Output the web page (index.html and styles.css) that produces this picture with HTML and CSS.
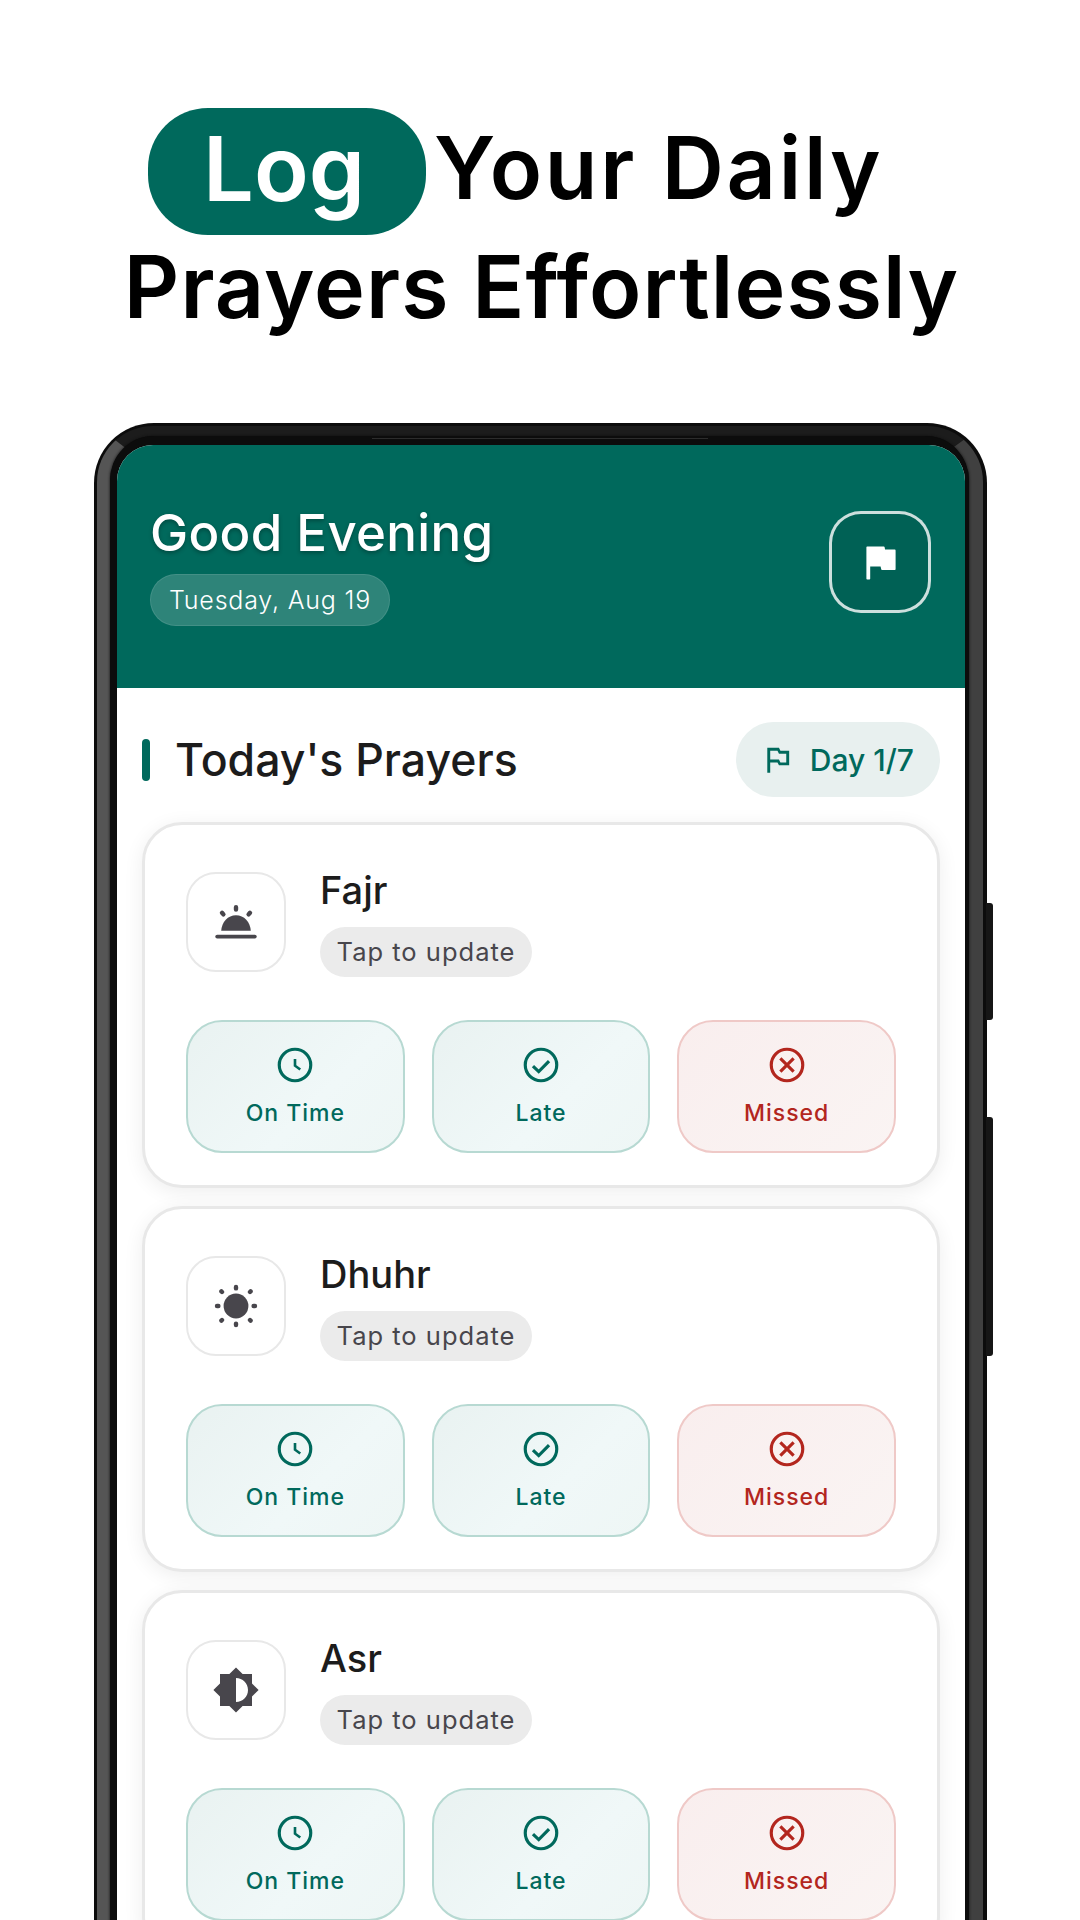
FILE: index.html
```html
<!DOCTYPE html>
<html>
  <head>
    <title>Log Your Daily Prayers</title>
    <meta charset="utf-8">
    <link rel="stylesheet" href="styles.css">
  </head>
  <body>
    <!-- (A) HEADLINE -->
    <header class="headline">
      <div class="headline-row">
        <span class="headline-pill">Log</span>
        <span class="headline-text">Your Daily</span>
      </div>
      <div class="headline-line">Prayers Effortlessly</div>
    </header>

    <!-- (B) PHONE -->
    <main class="phone">
      <span class="side-key side-key-power"></span>
      <span class="side-key side-key-volume"></span>
      <span class="speaker"></span>
      <div class="rim">
        <div class="bezel">
          <div class="screen">
            <!-- (B1) APP BAR -->
            <section class="app-bar">
              <div>
                <h1 class="greeting">Good Evening</h1>
                <span class="date-chip">Tuesday, Aug 19</span>
              </div>
              <button class="flag-btn">
                <svg width="48" height="48" viewBox="0 0 24 24"><path class="flag-fill" d="M14.2 6.2 13.9 4.6H5.6V20.4H6.7V13.8H12.6L13 15.6H19.4V6.2Z"/></svg>
              </button>
            </section>

            <!-- (B2) PRAYER LIST -->
            <section class="prayers">
              <div class="prayers-head">
                <h2 class="prayers-title">Today's Prayers</h2>
                <div class="day-pill">
                  <svg width="35" height="35" viewBox="0 0 24 24"><path d="M14 6l-1-2H5v17h2v-7h5l1 2h7V6h-6zm4 8h-4l-1-2H7V6h5l1 2h5v6z"/></svg>
                  <span>Day 1/7</span>
                </div>
              </div>

              <article class="card">
                <div class="card-top">
                  <div class="prayer-icon">
                    <svg width="48" height="48" viewBox="0 0 24 24">
                      <path class="solid" d="M4.6 16.4C4.8 12 8 8.6 12 8.6S19.2 12 19.4 16.4Z"/>
                      <path class="rays" d="M2.6 19.3H21.4"/>
                      <path class="rays rays-wide" d="M12 4.6V5.8M5 7.4 5.7 8.2M19 7.4 18.3 8.2"/>
                    </svg>
                  </div>
                  <div>
                    <div class="prayer-name">Fajr</div>
                    <span class="tap-chip">Tap to update</span>
                  </div>
                </div>
                <div class="actions">
                  <button class="action action-ok">
                    <svg width="42" height="42" viewBox="0 0 24 24"><circle cx="12" cy="12" r="9"/><path class="thin" d="M12 8.6V12.4L15 14.6"/></svg>
                    <span>On Time</span>
                  </button>
                  <button class="action action-ok">
                    <svg width="42" height="42" viewBox="0 0 24 24"><circle cx="12" cy="12" r="9"/><path d="M7.4 12.6 10.7 15.8 16.6 9.8"/></svg>
                    <span>Late</span>
                  </button>
                  <button class="action action-miss">
                    <svg width="42" height="42" viewBox="0 0 24 24"><circle cx="12" cy="12" r="9"/><path d="M8.2 8.2 15.8 15.8M15.8 8.2 8.2 15.8"/></svg>
                    <span>Missed</span>
                  </button>
                </div>
              </article>

              <article class="card">
                <div class="card-top">
                  <div class="prayer-icon">
                    <svg width="48" height="48" viewBox="0 0 24 24">
                      <circle class="solid" cx="12" cy="12" r="6.2"/>
                      <path class="rays rays-wide" d="M12 2.5V3.2M12 20.8V21.5M2.5 12H3.2M20.8 12H21.5M4.7 4.7 5 5M19.3 4.7 19 5M4.7 19.3 5 19M19.3 19.3 19 19"/>
                    </svg>
                  </div>
                  <div>
                    <div class="prayer-name">Dhuhr</div>
                    <span class="tap-chip">Tap to update</span>
                  </div>
                </div>
                <div class="actions">
                  <button class="action action-ok">
                    <svg width="42" height="42" viewBox="0 0 24 24"><circle cx="12" cy="12" r="9"/><path class="thin" d="M12 8.6V12.4L15 14.6"/></svg>
                    <span>On Time</span>
                  </button>
                  <button class="action action-ok">
                    <svg width="42" height="42" viewBox="0 0 24 24"><circle cx="12" cy="12" r="9"/><path d="M7.4 12.6 10.7 15.8 16.6 9.8"/></svg>
                    <span>Late</span>
                  </button>
                  <button class="action action-miss">
                    <svg width="42" height="42" viewBox="0 0 24 24"><circle cx="12" cy="12" r="9"/><path d="M8.2 8.2 15.8 15.8M15.8 8.2 8.2 15.8"/></svg>
                    <span>Missed</span>
                  </button>
                </div>
              </article>

              <article class="card">
                <div class="card-top">
                  <div class="prayer-icon">
                    <svg width="48" height="48" viewBox="0 0 24 24"><path class="solid" d="M20 15.31 23.31 12 20 8.69V4h-4.69L12 .69 8.69 4H4v4.69L.69 12 4 15.31V20h4.69L12 23.31 15.31 20H20v-4.69zM12 18V6c3.31 0 6 2.69 6 6s-2.69 6-6 6z"/></svg>
                  </div>
                  <div>
                    <div class="prayer-name">Asr</div>
                    <span class="tap-chip">Tap to update</span>
                  </div>
                </div>
                <div class="actions">
                  <button class="action action-ok">
                    <svg width="42" height="42" viewBox="0 0 24 24"><circle cx="12" cy="12" r="9"/><path class="thin" d="M12 8.6V12.4L15 14.6"/></svg>
                    <span>On Time</span>
                  </button>
                  <button class="action action-ok">
                    <svg width="42" height="42" viewBox="0 0 24 24"><circle cx="12" cy="12" r="9"/><path d="M7.4 12.6 10.7 15.8 16.6 9.8"/></svg>
                    <span>Late</span>
                  </button>
                  <button class="action action-miss">
                    <svg width="42" height="42" viewBox="0 0 24 24"><circle cx="12" cy="12" r="9"/><path d="M8.2 8.2 15.8 15.8M15.8 8.2 8.2 15.8"/></svg>
                    <span>Missed</span>
                  </button>
                </div>
              </article>
            </section>
          </div>
        </div>
      </div>
    </main>
  </body>
</html>
```

FILE: styles.css
```css
/* (A) PAGE */
* {
  box-sizing: border-box;
  font-family: Inter, "Liberation Sans", sans-serif;
}
html, body { height: 1920px; }
body {
  margin: 0;
  overflow: hidden;
  background: #fff;
}

/* (B) HEADLINE */
.headline {
  height: 423px;
  padding-top: 108px;
  color: #000;
  font-weight: 600;
  font-size: 86px;
  letter-spacing: 1.1px;
}
.headline-row {
  display: flex;
  margin-left: 148px;
  height: 127px;
}
.headline-pill {
  width: 278px;
  height: 127px;
  margin-right: 8px;
  padding-right: 6px;
  border-radius: 60px;
  background: #00695c;
  color: #fff;
  font-size: 90px;
  line-height: 122px;
  letter-spacing: 0;
  text-align: center;
  font-weight: 600;
}
.headline-text {
  line-height: 120px;
  letter-spacing: 2.8px;
}
.headline-line {
  height: 120px;
  margin-top: -8px;
  padding-left: 3px;
  line-height: 120px;
  text-align: center;
}

/* (C) PHONE FRAME */
.phone {
  position: relative;
  width: 893px;
  height: 1600px;
  margin-left: 94px;
  padding: 3px 4px 0 3px;
  border-radius: 60px 60px 0 0;
  background: #0c0c0c;
}
.rim {
  height: 100%;
  border-style: solid;
  border-width: 10px 14px 0 13px;
  border-color: #1c1c1c #404040 #404040 #555;
  border-radius: 56px 56px 0 0;
}
.bezel {
  height: 100%;
  padding: 9px 4px 0 7px;
  border-radius: 44px 44px 0 0;
  background: #0c0c0c;
  box-shadow: 0 0 3px #0c0c0c;
}
.screen {
  height: 100%;
  overflow: hidden;
  border-radius: 36px 36px 0 0;
  background: #fff;
}
.speaker {
  position: absolute;
  top: 15px;
  left: 278px;
  width: 336px;
  height: 1px;
  background: #2c2c2c;
}
.side-key {
  position: absolute;
  left: 892px;
  width: 7px;
  border-radius: 0 3px 3px 0;
  background: #161616;
}
.side-key-power { top: 480px; height: 117px; }
.side-key-volume { top: 694px; height: 239px; }

/* (D) APP BAR */
.app-bar {
  display: flex;
  justify-content: space-between;
  height: 243px;
  padding: 58px 34px 0 33px;
  background: #00695c;
  color: #fff;
}
.greeting {
  margin: 0 0 11px 0;
  font-size: 51px;
  line-height: 60px;
  font-weight: 500;
  letter-spacing: .3px;
  text-shadow: 0 2px 4px rgba(0, 0, 0, .3);
}
.date-chip {
  display: inline-block;
  height: 52px;
  padding: 0 18px;
  border: 1px solid rgba(255, 255, 255, .1);
  border-radius: 26px;
  background: rgba(255, 255, 255, .18);
  font-size: 25px;
  line-height: 50px;
  letter-spacing: .8px;
  font-weight: 300;
}
.flag-btn {
  display: flex;
  align-items: center;
  justify-content: center;
  width: 102px;
  height: 102px;
  margin-top: 8px;
  padding: 0;
  border: 3px solid rgba(255, 255, 255, .8);
  border-radius: 32px;
  background: #006155;
}
.flag-fill {
  fill: #fff;
  stroke: #fff;
  stroke-width: .8;
  stroke-linejoin: round;
}

/* (E) PRAYER LIST */
.prayers { padding: 34px 25px 0; }
.prayers-head {
  display: flex;
  align-items: center;
  justify-content: space-between;
  margin-bottom: 25px;
}
.prayers-title {
  display: flex;
  align-items: center;
  gap: 25px;
  margin: 0;
  color: #1c1c1c;
  font-size: 44.6px;
  font-weight: 500;
}
.prayers-title::before {
  content: "";
  width: 8px;
  height: 42px;
  border-radius: 4px;
  background: #00695c;
}
.day-pill {
  display: flex;
  align-items: center;
  gap: 15px;
  height: 75px;
  padding: 0 26px 0 24px;
  border-radius: 38px;
  background: #e8f0ef;
  color: #00695c;
  font-size: 30px;
  font-weight: 500;
}
.day-pill svg { fill: #00695c; }

/* (F) PRAYER CARD */
.card {
  margin-bottom: 18px;
  padding: 42px 41px 32px 41px;
  border: 3px solid #e8e8e8;
  border-radius: 40px;
  background: #fff;
  box-shadow: 0 4px 20px rgba(0, 0, 0, .07);
}
.card-top {
  display: flex;
  align-items: center;
  gap: 34px;
}
.prayer-icon {
  display: flex;
  align-items: center;
  justify-content: center;
  width: 100px;
  height: 100px;
  border: 2px solid #e8e8e8;
  border-radius: 30px;
}
.solid { fill: #48464c; }
.rays {
  fill: none;
  stroke: #48464c;
  stroke-width: 1.9;
  stroke-linecap: round;
}
.rays-wide { stroke-width: 2.2; }
.prayer-name {
  height: 46px;
  margin-bottom: 14px;
  color: #1c1c1c;
  font-size: 38px;
  line-height: 46px;
  font-weight: 500;
}
.tap-chip {
  display: block;
  width: 212px;
  height: 50px;
  border-radius: 25px;
  background: #ebebeb;
  color: #48464c;
  font-size: 25.5px;
  line-height: 50px;
  text-align: center;
  letter-spacing: 1px;
}
.actions {
  display: grid;
  grid-template-columns: repeat(3, 1fr);
  gap: 27px;
  margin-top: 43px;
}
.action {
  display: flex;
  flex-direction: column;
  align-items: center;
  gap: 13px;
  height: 133px;
  padding: 22px 0 0;
  border-width: 2px;
  border-style: solid;
  border-radius: 36px;
  font-size: 23px;
  line-height: 28px;
  font-weight: 500;
  letter-spacing: 1px;
}
.action svg {
  fill: none;
  stroke: currentColor;
  stroke-width: 1.8;
}
.action svg .thin { stroke-width: 1.5; }
.action-ok {
  border-color: #b7d9d2;
  background: linear-gradient(135deg, #e9f2f1, #f0f8f8 60%, #eef6f5);
  color: #00695c;
}
.action-miss {
  border-color: #efc9c7;
  background: linear-gradient(135deg, #f9eeee, #faf4f3);
  color: #b3261e;
}
```
